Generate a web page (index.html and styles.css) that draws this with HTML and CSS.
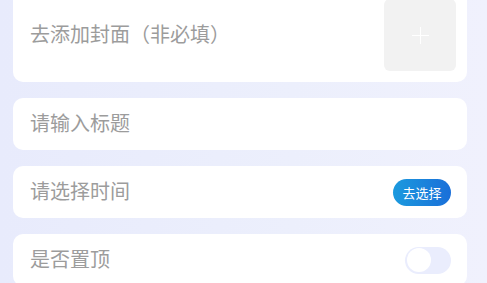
FILE: index.html
```html
<!DOCTYPE html>
<html lang="zh">
<head>
<meta charset="utf-8">
<link rel="stylesheet" href="styles.css">
</head>
<body>
<div class="page">
  <div class="card card-cover">
    <span class="label">去添加封面（非必填）</span>
    <div class="cover-box"><span class="plus"></span></div>
  </div>
  <div class="card">
    <span class="label">请输入标题</span>
  </div>
  <div class="card">
    <span class="label">请选择时间</span>
    <span class="btn">去选择</span>
  </div>
  <div class="card">
    <span class="label">是否置顶</span>
    <span class="toggle"><span class="knob"></span></span>
  </div>
</div>
</body>
</html>
```
FILE: styles.css
```css
html, body {
  margin: 0;
  padding: 0;
}
body {
  width: 487px;
  height: 283px;
  overflow: hidden;
  background: linear-gradient(90deg, #e8ebfc 0%, #eceffc 60%, #f0f1fd 100%);
  font-family: "Noto Sans CJK SC", "Noto Sans", sans-serif;
}
.page {
  display: flex;
  flex-direction: column;
  gap: 16px;
  padding: 0 20px 0 13px;
  margin-top: -12px;
}
.card {
  background: #ffffff;
  border-radius: 10px;
  height: 52px;
  display: flex;
  align-items: center;
  justify-content: space-between;
  padding: 0 16px 0 17px;
}
.card-cover {
  height: 94px;
  padding-right: 11px;
}
.label {
  font-size: 20px;
  color: #9c9c9c;
  line-height: 1;
  margin-top: -2px;
}
.cover-box {
  width: 72px;
  height: 72px;
  border-radius: 6px;
  background: #f2f2f2;
  display: flex;
  align-items: center;
  justify-content: center;
}
.plus {
  position: relative;
  width: 17px;
  height: 17px;
}
.plus::before, .plus::after {
  content: "";
  position: absolute;
  background: #ffffff;
}
.plus::before {
  left: 0; right: 0; top: 8px; height: 1.5px;
}
.plus::after {
  top: 0; bottom: 0; left: 8px; width: 1.5px;
}
.btn {
  width: 58px;
  height: 27px;
  border-radius: 14px;
  background: linear-gradient(90deg, #1b9ade 0%, #1a6fd9 100%);
  color: #ffffff;
  font-size: 13px;
  display: flex;
  align-items: center;
  justify-content: center;
}
.toggle {
  width: 46px;
  height: 27px;
  border-radius: 14px;
  background: #eaedfd;
  display: flex;
  align-items: center;
  padding-left: 2px;
  box-sizing: border-box;
}
.knob {
  width: 24px;
  height: 24px;
  border-radius: 50%;
  background: #ffffff;
}
```
